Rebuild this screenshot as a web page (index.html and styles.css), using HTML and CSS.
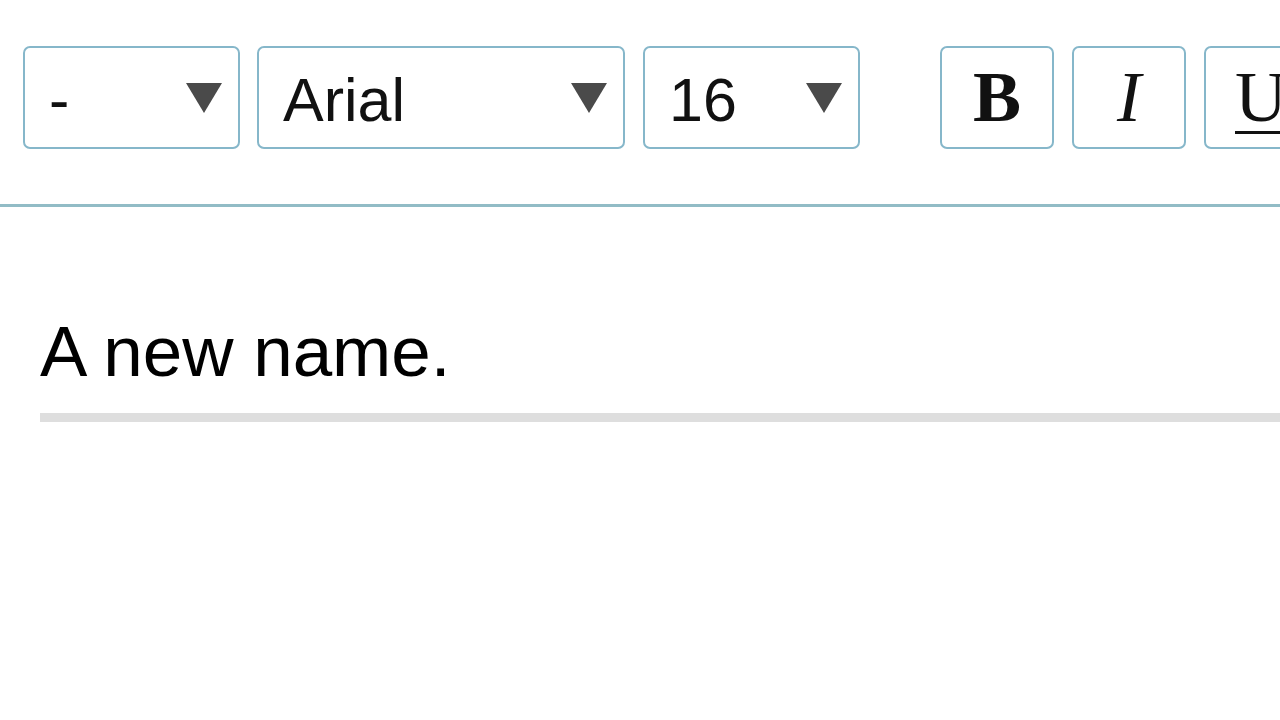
FILE: index.html
```html
<!DOCTYPE html>
<html lang="en">
<head>
<meta charset="utf-8">
<title>Editor</title>
<link rel="stylesheet" href="styles.css">
</head>
<body>
<div class="toolbar">
  <div class="select select-style"><span class="value">-</span><span class="caret"></span></div>
  <div class="select select-font"><span class="value">Arial</span><span class="caret"></span></div>
  <div class="select select-size"><span class="value">16</span><span class="caret"></span></div>
  <div class="buttons">
    <div class="btn btn-bold">B</div>
    <div class="btn btn-italic">I</div>
    <div class="btn btn-underline">U</div>
  </div>
</div>
<div class="content">
  <div class="field">A new name.</div>
</div>
</body>
</html>
```

FILE: styles.css
```css
html, body {
  margin: 0;
  padding: 0;
  background: #ffffff;
  overflow: hidden;
  width: 1280px;
  height: 720px;
}

.toolbar {
  display: flex;
  align-items: flex-start;
  gap: 18px;
  padding: 46px 0 55px 23px;
  border-bottom: 3px solid #92bcc6;
  white-space: nowrap;
}

.select {
  box-sizing: border-box;
  height: 103px;
  border: 2px solid #86b7ca;
  border-radius: 7px;
  display: flex;
  align-items: center;
  justify-content: space-between;
  padding: 4px 16px 0 24px;
  font-family: "Liberation Sans", Arial, sans-serif;
  font-size: 61px;
  color: #111;
  flex: none;
}

.select-style { width: 217px; margin-right: -1px; }
.select-font { width: 368px; }
.select-size { width: 217px; }

.caret {
  width: 0;
  height: 0;
  border-left: 18.5px solid transparent;
  border-right: 18.5px solid transparent;
  border-top: 30px solid #4a4a4a;
  margin-top: -4px;
}

.buttons {
  display: flex;
  gap: 18px;
  margin-left: 62px;
  flex: none;
}

.btn {
  box-sizing: border-box;
  width: 114px;
  height: 103px;
  border: 2px solid #86b7ca;
  border-radius: 7px;
  display: flex;
  align-items: center;
  justify-content: center;
  font-family: "Liberation Serif", "Times New Roman", serif;
  font-size: 72px;
  color: #111;
  flex: none;
}

.btn-bold { font-weight: bold; }
.btn-italic { font-style: italic; }
.btn-underline { text-decoration: underline; text-decoration-thickness: 3px; text-underline-offset: 10px; }

.content {
  padding: 105px 0 0 40px;
}

.field {
  font-family: "Liberation Sans", Arial, sans-serif;
  font-size: 71px;
  line-height: 80px;
  color: #000;
  padding-bottom: 21px;
  border-bottom: 9px solid #dedede;
}
```
